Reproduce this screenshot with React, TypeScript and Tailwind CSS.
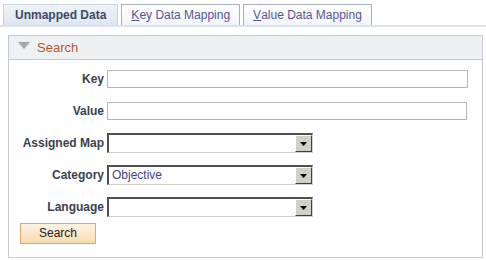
import { ReactNode } from 'react'

const FONT = { fontFamily: '"Liberation Sans", Arial, sans-serif' }

function Tab({ label, accessKey, active }: { label: string; accessKey?: boolean; active?: boolean }) {
  if (active) {
    return (
      <div className="h-[21px] px-[11px] flex items-center bg-gradient-to-b from-[#f0f4f8] to-[#dde5ef] border border-b-0 border-[#c9d3df] text-[12px] font-bold text-[#3b4a64]">
        {label}
      </div>
    )
  }
  return (
    <div className="h-[21px] px-[9px] flex items-center bg-gradient-to-b from-white to-[#f3f5f8] border border-b-0 border-[#a9aeb8] text-[12px] text-[#55559a]">
      {accessKey ? <><span className="underline">{label[0]}</span>{label.slice(1)}</> : label}
    </div>
  )
}

function Row({ label, children }: { label: string; children: ReactNode }) {
  return (
    <div className="flex items-center h-[32px]">
      <div className="w-[98px] text-right text-[12px] font-bold text-[#3a4250] pr-[3px] whitespace-nowrap">{label}</div>
      {children}
    </div>
  )
}

function TextBox({ w }: { w: string }) {
  return <div className={`${w} h-[18px] border border-[#b5b5b5] bg-white`} />
}

function Select({ value }: { value?: string }) {
  return (
    <div className="w-[206px] h-[20px] flex border-t-2 border-l-2 border-t-[#505050] border-l-[#505050] border-b border-r border-b-[#d4d0c8] border-r-[#d4d0c8] bg-white">
      <div className="flex-1 text-[12px] text-[#47408a] pl-[3px] leading-[17px]">{value}</div>
      <div className="w-[17px] h-[17px] bg-[#d4d0c8] border-t border-l border-t-white border-l-white border-b border-r border-b-[#404040] border-r-[#404040] flex items-center justify-center">
        <svg width="7" height="4" viewBox="0 0 7 4"><path d="M0 0h7L3.5 4z" fill="#000" /></svg>
      </div>
    </div>
  )
}

export default function App() {
  return (
    <div className="w-[486px] h-[260px] bg-white overflow-hidden" style={FONT}>
      <div className="flex items-end pt-[4px] pl-[3px] gap-[3px] border-b-2 border-[#dbe3ee]">
        <Tab label="Unmapped Data" active />
        <Tab label="Key Data Mapping" accessKey />
        <Tab label="Value Data Mapping" accessKey />
      </div>

      <div className="ml-[8px] mr-[3px] mt-[8px] h-[223px] border border-[#c6cad2]">
        <div className="h-[24px] bg-[#eef1f4] border-b border-[#c6cad2] flex items-center pl-[9px] gap-[7px]">
          <svg width="12" height="7" viewBox="0 0 12 7" className="-mt-[5px]"><path d="M0 0h12L6 7z" fill="#a6a6a6" /></svg>
          <span className="text-[13px] text-[#b9572f]">Search</span>
        </div>
        <div className="pt-[3px]">
          <Row label="Key"><TextBox w="w-[361px]" /></Row>
          <Row label="Value"><TextBox w="w-[360px]" /></Row>
          <Row label="Assigned Map"><Select /></Row>
          <Row label="Category"><Select value="Objective" /></Row>
          <Row label="Language"><Select /></Row>
          <div className="pl-[11px] -mt-[3px]">
            <button className="w-[76px] h-[21px] border border-[#e0a86a] bg-gradient-to-b from-[#fdf3e2] to-[#f7dcb0] text-[12px] text-[#222]">Search</button>
          </div>
        </div>
      </div>
    </div>
  )
}
